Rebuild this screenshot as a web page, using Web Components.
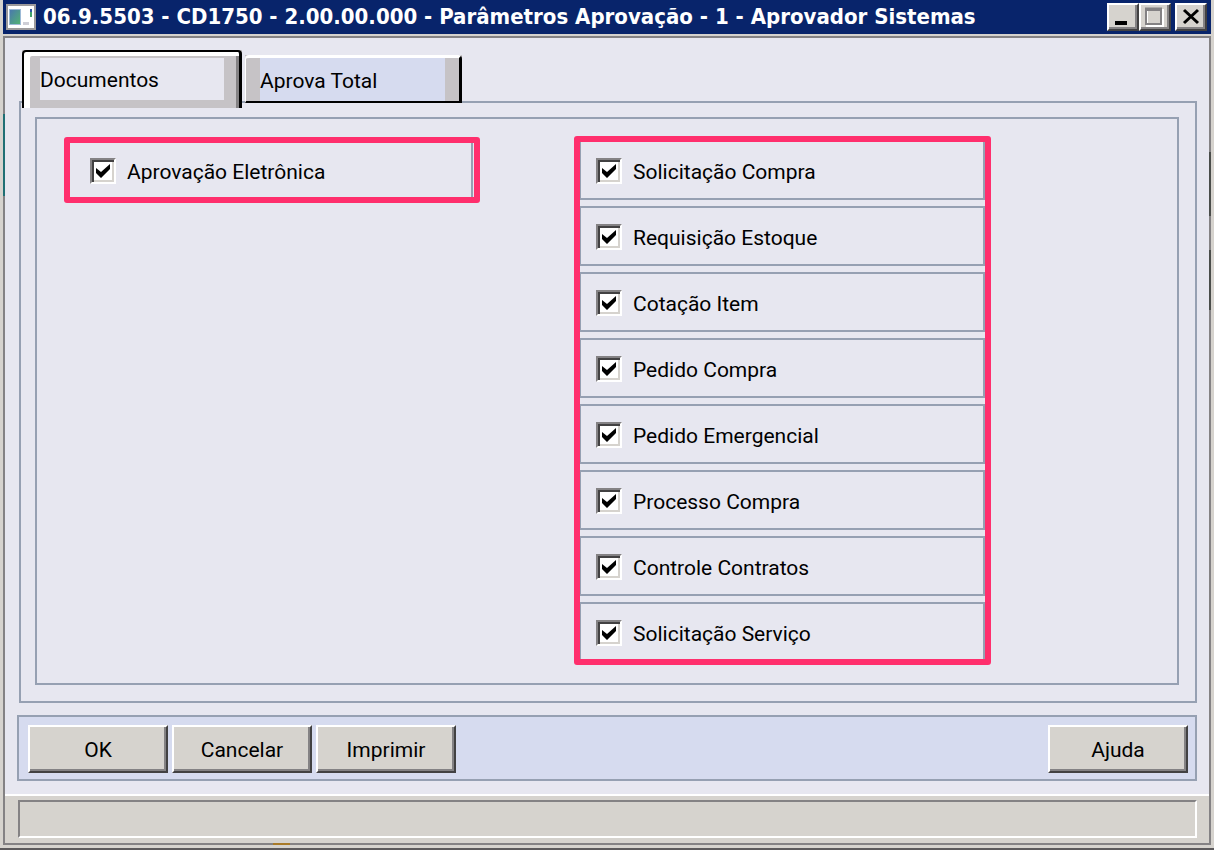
<!DOCTYPE html>
<html lang="pt-BR">
<head>
<meta charset="utf-8">
<title>Parâmetros Aprovação</title>
<style>
  html, body { height: 100%; }

  body {
    margin: 0;
    background: #d6d3ce;
    color: #000;
    font: 21px/28px Roboto, "Liberation Sans", Arial, sans-serif;
    --fundo: #e7e7f0;
    --lilas: #d6dbef;
    --cinza: #d6d3ce;
    --linha: #96a0b2;
    --rosa: #ff2f6d;
  }
</style>
</head>
<body>
<app-window>
  <title-bar slot="titulo">06.9.5503 - CD1750 - 2.00.00.000 - Parâmetros Aprovação - 1 - Aprovador Sistemas</title-bar>
  <tab-panel>
    <tab-button slot="abas" ativa>Documentos</tab-button>
    <tab-button slot="abas">Aprova Total</tab-button>
    <check-group class="simples">
      <check-row>Aprovação Eletrônica</check-row>
    </check-group>
    <check-group>
      <check-row>Solicitação Compra</check-row>
      <check-row>Requisição Estoque</check-row>
      <check-row>Cotação Item</check-row>
      <check-row>Pedido Compra</check-row>
      <check-row>Pedido Emergencial</check-row>
      <check-row>Processo Compra</check-row>
      <check-row>Controle Contratos</check-row>
      <check-row>Solicitação Serviço</check-row>
    </check-group>
  </tab-panel>
  <button-bar>
    <push-button>OK</push-button>
    <push-button>Cancelar</push-button>
    <push-button>Imprimir</push-button>
    <push-button slot="fim">Ajuda</push-button>
  </button-bar>
  <status-bar slot="status"></status-bar>
</app-window>

<script>
/* cria o shadow root com o html do componente */
class BaseElement extends HTMLElement {
  constructor() {
    super();
    this.attachShadow({ mode: 'open' });
  }

  connectedCallback() {
    this.shadowRoot.innerHTML = this.render();
  }
}

/* janela: moldura, area do formulario e barra de status */
class AppWindow extends BaseElement {
  render() {
    return `
      <style>
        :host {
          display: flex;
          flex-direction: column;
          box-sizing: border-box;
          min-height: 100%;
          padding: 0 3px 3px;
          border-bottom: 2px solid #5c5a5c;
        }

        /* a borda deixa ver um pouco do que fica atras da janela */
        .area {
          flex: 1;
          display: flex;
          flex-direction: column;
          border: 2px solid transparent;
          background:
            linear-gradient(var(--fundo), var(--fundo)) padding-box,
            linear-gradient(#848284 78px, #1f6f74 78px 160px, #848284 160px) left / 2px 100% no-repeat border-box,
            linear-gradient(#848284 116px, #4a4d4a 116px 180px, #848284 180px 214px, #4a4d4a 214px 274px, #848284 274px) right / 2px 100% no-repeat border-box,
            linear-gradient(90deg, #848284 270px, #a87a28 270px 287px, #848284 287px) bottom / 100% 2px no-repeat border-box,
            linear-gradient(#848284, #848284) border-box;
        }

        .conteudo {
          flex: 1;
          display: flex;
          flex-direction: column;
          gap: 12px;
          padding: 12px 12px 13px;
        }
      </style>
      <slot name="titulo"></slot>
      <div class="area">
        <div class="conteudo"><slot></slot></div>
        <slot name="status"></slot>
      </div>
    `;
  }
}

class TitleBar extends BaseElement {
  render() {
    return `
      <style>
        :host {
          display: flex;
          align-items: center;
          height: 34px;
          margin-bottom: 2px;
          padding: 0 4px 0 3px;
          box-sizing: border-box;
          background: #08246b;
          color: #fff;
          font: bold 22px/28px "DejaVu Sans Condensed", "DejaVu Sans", sans-serif;
        }

        .icone {
          flex: none;
          width: 30px;
          height: 26px;
          margin-right: 7px;
        }

        .texto { flex: 1; white-space: nowrap; overflow: hidden; }

        button {
          width: 32px;
          height: 28px;
          padding: 0;
          border: 2px solid;
          border-color: #fff #424142 #424142 #fff;
          background: var(--cinza);
          box-shadow: inset -2px -2px #848284;
        }

        button:last-child { margin-left: 4px; }

        button svg { display: block; width: 28px; height: 24px; }
      </style>
      <svg class="icone" viewBox="0 0 30 26">
        <defs>
          <linearGradient id="tela" x2="1" y2="1">
            <stop offset="0" stop-color="#4a79ad"/>
            <stop offset="1" stop-color="#52b273"/>
          </linearGradient>
        </defs>
        <path d="M0 0h30v26H0z" fill="#9c9a9c"/>
        <path d="M2 2h26v22H2z" fill="#fff"/>
        <path d="M3 5h12v16H3z" fill="#9cbad6"/>
        <path d="M4 6h10v14H4z" fill="url(#tela)"/>
        <path d="M24 5h2v8h-2z" fill="#42a26b"/>
        <path d="M24 5h2v3h-2z" fill="#3159a5"/>
        <path d="M17 18h6v3h-6z" fill="#ceced6"/>
      </svg>
      <span class="texto"><slot></slot></span>
      <button aria-label="Minimizar"><svg viewBox="0 0 28 24"><path d="M6 16h12v4H6z"/></svg></button>
      <button aria-label="Maximizar"><svg viewBox="0 0 28 24"><path d="M6 5h16v16H6z" fill="none" stroke="#fff" stroke-width="2"/><path d="M5 5h15v14H5z" fill="none" stroke="#848284" stroke-width="2"/><path d="M4 4h17" stroke="#848284" stroke-width="3"/></svg></button>
      <button aria-label="Fechar"><svg viewBox="0 0 28 24"><path d="M7 5l14 13M21 5L7 18" fill="none" stroke="#000" stroke-width="3"/></svg></button>
    `;
  }
}

/* abas e os dois quadros do formulario */
class TabPanel extends BaseElement {
  render() {
    return `
      <style>
        :host {
          flex: 1;
          display: flex;
          flex-direction: column;
          margin-left: 2px;
        }

        .abas {
          display: flex;
          gap: 3px;
          height: 51px;
          padding-left: 3px;
        }

        .quadro {
          flex: 1;
          display: flex;
          padding: 14px 16px 16px 14px;
          border: 2px solid var(--linha);
        }

        .interno {
          flex: 1;
          display: grid;
          grid-template-columns: 416px 417px;
          align-items: start;
          gap: 94px;
          padding: 17px 0 18px 27px;
          border: 2px solid var(--linha);
        }
      </style>
      <div class="abas"><slot name="abas"></slot></div>
      <div class="quadro">
        <div class="interno"><slot></slot></div>
      </div>
    `;
  }
}

class TabButton extends BaseElement {
  render() {
    return `
      <style>
        :host { display: block; padding-top: 5px; }

        button {
          display: block;
          position: relative;
          box-sizing: border-box;
          width: 217px;
          height: 48px;
          padding: 0;
          border: solid #c6c3c6;
          border-width: 3px 17px 0 15px;
          background: var(--lilas);
          color: inherit;
          font: inherit;
          text-align: left;
          outline: 0;
        }

        button::before {
          content: "";
          position: absolute;
          inset: -3px -17px 0 -15px;
          border: solid;
          border-width: 3px 3px 2px 1px;
          border-color: #fff #000 #000 #fff;
          border-radius: 4px 4px 0 0;
        }

        :host([ativa]) { padding-top: 0; }

        :host([ativa]) button {
          width: 220px;
          height: 58px;
          padding: 2px 0 0;
          border-width: 8px 18px 8px 18px;
          background: var(--fundo);
        }

        :host([ativa]) button::before {
          inset: -8px -18px -8px;
          border-width: 2px 3px 0 2px;
          border-color: #000;
          box-shadow: inset 6px 4px #fff, inset -3px 0 #848284;
        }
      </style>
      <button><slot></slot></button>
    `;
  }
}

/* contorno rosa ao redor dos campos */
class CheckGroup extends BaseElement {
  render() {
    return `
      <style>
        :host {
          display: grid;
          gap: 6px;
          border: 6px solid var(--rosa);
          border-radius: 3px;
          background: var(--fundo);
        }

        :host(.simples) {
          margin-top: 1px;
          padding-right: 1px;
        }
      </style>
      <slot></slot>
    `;
  }
}

class CheckRow extends BaseElement {
  render() {
    return `
      <style>
        :host {
          display: block;
          box-sizing: border-box;
          height: 60px;
          border: 2px solid var(--linha);
          border-width: 2px 2px 2px 1px;
        }

        :host(:first-child) { height: 58px; border-top: 0; }
        :host(:last-child) { height: 57px; border-bottom: 0; }
        :host(:only-child) { height: 54px; border-left: 0; }

        label {
          display: flex;
          align-items: center;
          gap: 11px;
          height: 58px;
          padding-left: 15px;
        }

        span { padding-top: 2px; }

        :host(:only-child) label { height: 56px; padding-left: 20px; }

        input {
          appearance: none;
          width: 26px;
          height: 26px;
          margin: 0;
          border: 2px solid;
          border-color: #848284 #fff #fff #848284;
          background: #fff;
          box-shadow: inset 2px 2px #424142, inset -2px -2px #d6d3ce;
        }

        input:checked {
          background: #fff url("data:image/svg+xml,%3Csvg xmlns='http://www.w3.org/2000/svg' viewBox='0 0 22 22'%3E%3Cpath d='M4 8l5 4 9-8v5l-9 9-5-5z'/%3E%3C/svg%3E") center / 22px no-repeat;
        }
      </style>
      <label><input type="checkbox" checked><span><slot></slot></span></label>
    `;
  }
}

class ButtonBar extends BaseElement {
  render() {
    return `
      <style>
        :host {
          display: flex;
          gap: 4px;
          padding: 8px 7px 6px 9px;
          border: 2px solid var(--linha);
          background: var(--lilas);
        }

        .espaco { flex: 1; }
      </style>
      <slot></slot>
      <div class="espaco"></div>
      <slot name="fim"></slot>
    `;
  }
}

class PushButton extends BaseElement {
  render() {
    return `
      <style>
        :host { display: block; }

        button {
          display: block;
          width: 140px;
          height: 48px;
          padding: 2px 0 0;
          border: 2px solid;
          border-color: #fff #424142 #424142 #fff;
          box-shadow: inset -2px -2px #848284;
          background: var(--cinza);
          color: inherit;
          font: inherit;
        }
      </style>
      <button><slot></slot></button>
    `;
  }
}

class StatusBar extends BaseElement {
  render() {
    return `
      <style>
        :host {
          display: block;
          padding: 4px 12px 5px 13px;
          border-top: 2px solid #fff;
          background: var(--cinza);
        }

        .campo {
          height: 34px;
          border: 2px solid;
          border-color: #848284 #fff #fff #848284;
        }
      </style>
      <div class="campo"></div>
    `;
  }
}

customElements.define('app-window', AppWindow);
customElements.define('title-bar', TitleBar);
customElements.define('tab-panel', TabPanel);
customElements.define('tab-button', TabButton);
customElements.define('check-group', CheckGroup);
customElements.define('check-row', CheckRow);
customElements.define('button-bar', ButtonBar);
customElements.define('push-button', PushButton);
customElements.define('status-bar', StatusBar);
</script>
</body>
</html>
